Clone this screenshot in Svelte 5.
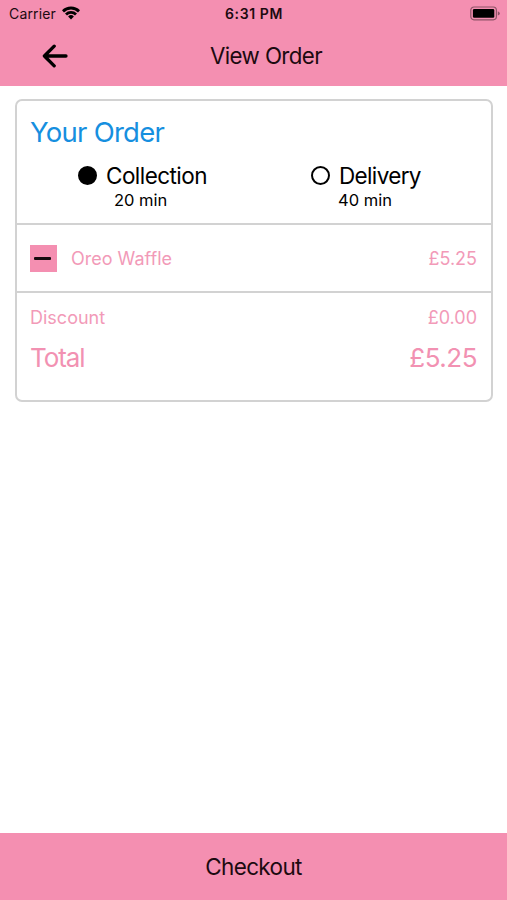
<script>
  const options = [
    { id: 'collection', label: 'Collection', wait: '20 min', selected: true },
    { id: 'delivery', label: 'Delivery', wait: '40 min', selected: false },
  ];
  const items = [{ name: 'Oreo Waffle', price: '£5.25' }];
</script>

<div class="screen">
  <header>
    <div class="status">
      <div class="carrier">
        <span class="carrier-name">Carrier</span>
        <svg class="wifi" width="18" height="14" viewBox="0 0 18 14">
          <path d="M0 4.2a12.7 12.7 0 0 1 18 0l-2 2.2a9.8 9.8 0 0 0-14 0z" />
          <path d="M3 7.4a8.5 8.5 0 0 1 12 0l-2 2.1a5.6 5.6 0 0 0-8 0z" />
          <path d="M6.1 10.5a4.1 4.1 0 0 1 5.8 0l-2.9 3z" />
        </svg>
      </div>
      <span class="time">6:31 PM</span>
      <svg class="battery" width="31" height="15" viewBox="0 0 31 15">
        <rect x="0.8" y="1" width="25.6" height="12.8" rx="3.2" fill="none" stroke="#000" stroke-opacity=".42" stroke-width="1.2" />
        <rect x="2.9" y="3.1" width="21.4" height="8.7" rx="1.3" />
        <path d="M27.8 5.2q2 .8 2 2.2t-2 2.2z" fill-opacity=".42" />
      </svg>
    </div>
    <div class="nav">
      <svg class="back" width="26" height="24" viewBox="0 0 26 24" fill="none" stroke="#000" stroke-width="3.3" stroke-linecap="round" stroke-linejoin="round">
        <path d="M12.2 2.2 2.4 12l9.8 9.8M2.4 12H24" />
      </svg>
      <h1>View Order</h1>
    </div>
  </header>

  <main>
    <section class="card">
      <div class="block head">
        <h2>Your Order</h2>
        <div class="options">
          {#each options as o (o.id)}
            <div class="option {o.id}">
              <div class="choice">
                <span class="radio" class:selected={o.selected}></span>
                <span class="label">{o.label}</span>
              </div>
              <span class="wait">{o.wait}</span>
            </div>
          {/each}
        </div>
      </div>
      {#each items as item (item.name)}
        <div class="block item">
          <button aria-label="Remove item"><i></i></button>
          <span class="name">{item.name}</span>
          <span class="price">{item.price}</span>
        </div>
      {/each}
      <div class="block totals">
        <div class="row discount"><span>Discount</span><span class="amount">£0.00</span></div>
        <div class="row total"><span>Total</span><span class="amount">£5.25</span></div>
      </div>
    </section>
  </main>

  <footer><span>Checkout</span></footer>
</div>

<style>
  :global(body) { margin: 0; background: #fff; }
  .screen {
    height: 900px;
    display: flex;
    flex-direction: column;
    font-family: Inter, 'Liberation Sans', sans-serif;
    color: #000;
    white-space: nowrap;
  }
  header { height: 86px; background: #f48fb1; color: #1c0a10; }
  .status {
    display: grid;
    grid-template-columns: 1fr auto 1fr;
    align-items: center;
    height: 27px;
    padding: 0 6px 0 9px;
  }
  .carrier { display: flex; align-items: center; gap: 6px; }
  .carrier-name { font-size: 14px; letter-spacing: 0.15px; }
  .wifi { margin-top: -2px; fill: #000; }
  .time { font-size: 14px; font-weight: 600; letter-spacing: 0.6px; margin-right: 2px; }
  .battery { justify-self: end; }
  .nav {
    display: grid;
    grid-template-columns: 1fr auto 1fr;
    align-items: center;
    height: 57px;
  }
  .back { margin-left: 42px; }
  h1 { grid-column: 2; margin: 0 0 0 25px; font-size: 22.3px; font-weight: 400; line-height: 30px; letter-spacing: -0.6px; }
  .nav::after { content: ''; }
  main { flex: 1; padding: 13px 14px 0 15px; }
  .card {
    box-sizing: border-box;
    height: 303px;
    border: 2px solid #d2d2d2;
    border-radius: 7px;
    display: flex;
    flex-direction: column;
  }
  .block { box-sizing: border-box; padding: 0 14px 0 13px; }
  .head { height: 124px; border-bottom: 2px solid #d2d2d2; padding-top: 13px; }
  h2 { margin: 0; font-size: 27.5px; font-weight: 400; line-height: 36px; color: #168fdf; letter-spacing: -0.75px; }
  .options { display: flex; padding-top: 10px; }
  .option { box-sizing: border-box; display: flex; flex-direction: column; flex: none; width: 234px; }
  .collection { padding-left: 48px; }
  .delivery { padding-left: 47px; width: 211px; }
  .choice { display: flex; align-items: center; gap: 9px; height: 31px; }
  .radio { box-sizing: border-box; width: 19px; height: 19px; border: 2px solid #000; border-radius: 50%; }
  .radio.selected { background: #000; }
  .label { font-size: 22.5px; letter-spacing: -0.55px; line-height: 28px; }
  .delivery .label { letter-spacing: -0.65px; }
  .wait { font-size: 16.5px; line-height: 18px; padding-left: 27px; }
  .collection .wait { padding-left: 36px; }
  .item { display: flex; align-items: center; height: 68px; border-bottom: 2px solid #d2d2d2; color: #f29ab8; font-size: 18px; }
  button { width: 27px; height: 27px; margin: 0; padding: 0; border: 0; background: #f48fb1; display: flex; align-items: center; justify-content: center; }
  button i { width: 17px; height: 3px; margin-right: 2px; border-radius: 1px; background: #170a0e; }
  .name { margin-left: 14px; }
  .price { margin-left: auto; }
  .totals { padding-top: 10px; color: #f29ab8; }
  .row { display: flex; justify-content: space-between; align-items: center; }
  .discount { height: 28px; font-size: 18px; }
  .total { height: 53px; font-size: 26px; color: #f291b2; letter-spacing: -1.1px; }
  .total .amount { letter-spacing: -0.5px; }
  footer {
    height: 67px;
    display: flex;
    align-items: center;
    justify-content: center;
    background: #f48fb1;
    font-size: 22.5px;
    letter-spacing: -0.65px;
    color: #1c0a10;
  }
</style>
